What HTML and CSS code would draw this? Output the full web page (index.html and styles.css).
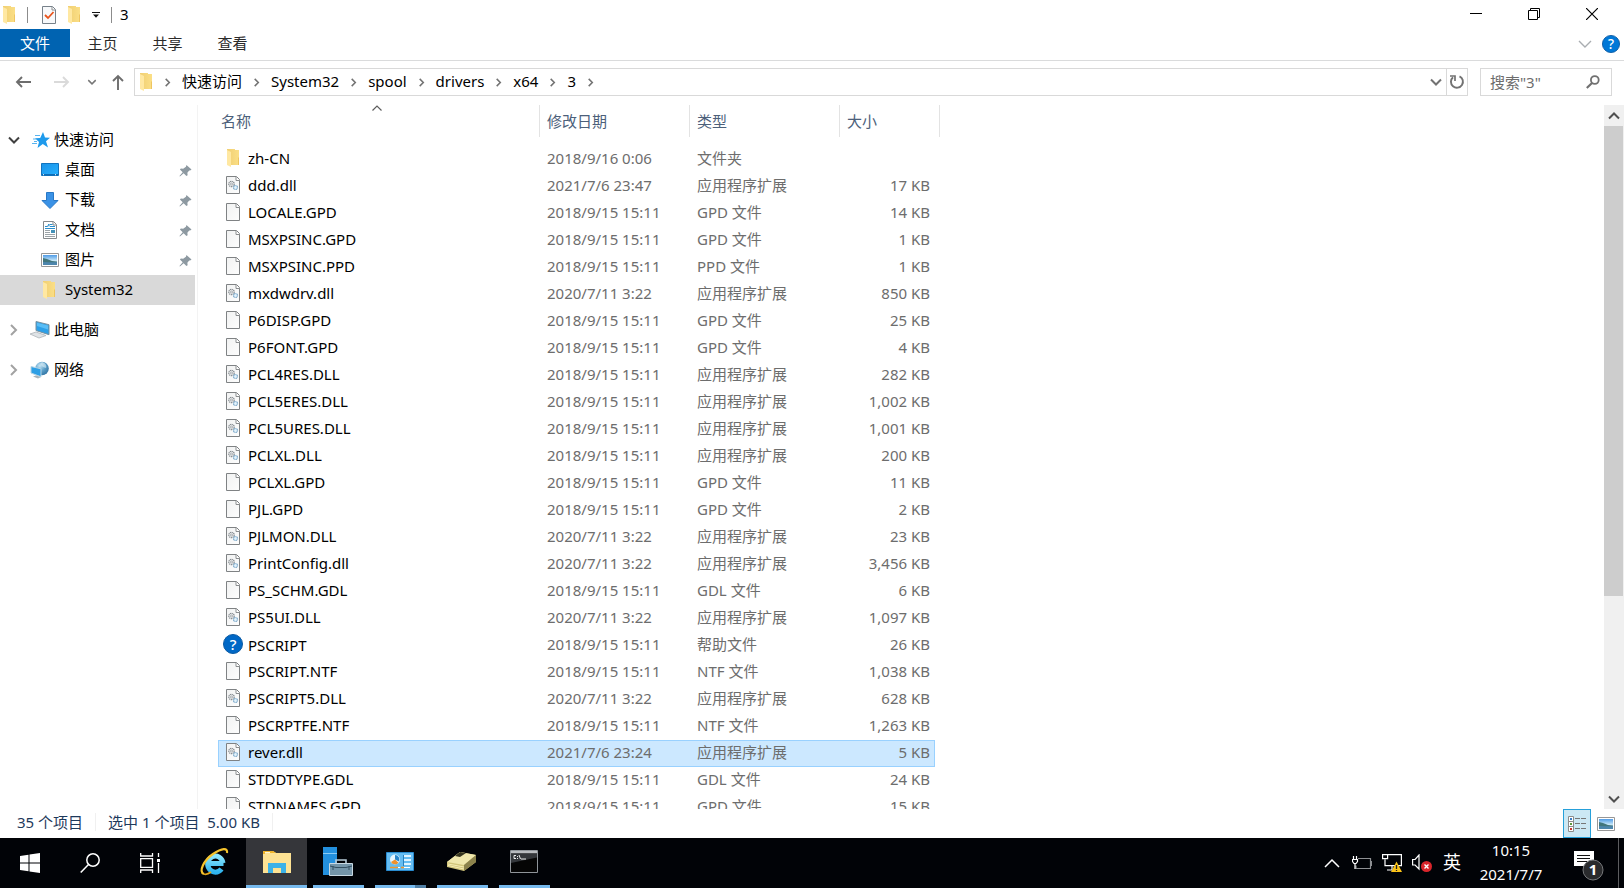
FILE: index.html
```html
<!DOCTYPE html>
<html lang="zh-CN">
<head>
<meta charset="utf-8">
<title>3</title>
<link rel="stylesheet" href="styles.css">
</head>
<body>
<svg class="defs" aria-hidden="true">
  <defs>
    <linearGradient id="g-folder" x1="0" y1="0" x2="1" y2="0"><stop offset="0" stop-color="#f0cf73"/><stop offset="1" stop-color="#fbdf86"/></linearGradient>
    <linearGradient id="g-page" x1="0" y1="0" x2="1" y2="1"><stop offset="0" stop-color="#f1f2f2"/><stop offset="1" stop-color="#fdfdfd"/></linearGradient>
    <linearGradient id="g-blue" x1="0" y1="0" x2="1" y2="1"><stop offset="0" stop-color="#1a93e8"/><stop offset="1" stop-color="#27b1ff"/></linearGradient>
    <linearGradient id="g-sky" x1="0" y1="0" x2="0" y2="1"><stop offset="0" stop-color="#4f9be6"/><stop offset=".55" stop-color="#c5e6f8"/><stop offset="1" stop-color="#e6f4fb"/></linearGradient>
    <linearGradient id="g-ie" x1="0" y1="0" x2="0" y2="1"><stop offset="0" stop-color="#8be6fd"/><stop offset="1" stop-color="#2fb4ee"/></linearGradient>
    <radialGradient id="g-globe" cx=".35" cy=".3" r=".8"><stop offset="0" stop-color="#c9e6f5"/><stop offset=".5" stop-color="#5b9fc9"/><stop offset="1" stop-color="#2d6f9f"/></radialGradient>
  </defs>
  <symbol id="folder" viewBox="0 0 14 18">
    <path d="M1 0h8v1h4v15H5l-4 0z" fill="url(#g-folder)"/>
    <path d="M1 1l4 2v15l-4-2z" fill="#ffe8a2"/>
    <path d="M12 8v8h1V9z" fill="#eec561"/>
  </symbol>
  <symbol id="page" viewBox="0 0 14 18">
    <path d="M.5.5h10l3 3v14H.5z" fill="url(#g-page)" stroke="#7f8284"/>
    <path d="M10 1v3.500h3.500" fill="#fff" stroke="#8b8e90"/>
  </symbol>
  <symbol id="dll" viewBox="0 0 14 18">
    <use href="#page" width="14" height="18"/>
    <circle cx="5.500" cy="8" r="2.700" fill="#f0f1f1" stroke="#858b90" stroke-width="1.200" stroke-dasharray="1.200 .6"/>
    <circle cx="5.500" cy="8" r="1" fill="#fff" stroke="#858b90" stroke-width=".7"/>
    <circle cx="9.500" cy="11.500" r="2" fill="#e3f2fb" stroke="#78a6c8" stroke-width="1.200" stroke-dasharray="1 .4"/>
  </symbol>
  <symbol id="pin" viewBox="0 0 14 14">
    <path d="M8 1l5.500 5-1.500 1-1 0-2 2.500.3 2.500L8 13 5 10 1 13.500.5 13 4 9 1 6l1-1.200 2.500.3L7.500 3z" fill="#8d99a1"/>
  </symbol>
  <symbol id="picture" viewBox="0 0 18 14">
    <path d="M.5.500h17v13H.5z" fill="#fff" stroke="#979797"/>
    <path d="M2 2h14v10H2z" fill="url(#g-sky)"/>
    <path d="M2 5l4 1 5 2 5 .5V10H2z" fill="#42767c"/>
    <path d="M2 9l5 .3 9 0V12H2z" fill="#4d86ad"/>
  </symbol>
  <symbol id="crumb" viewBox="0 0 8 10"><path d="M2 1l4 4-4 4" fill="none" stroke="#727272" stroke-width="1.700"/></symbol>
  <symbol id="expand" viewBox="0 0 8 12"><path d="M1 1l5 5-5 5" fill="none" stroke="#a2a2a2" stroke-width="2"/></symbol>
  <symbol id="down" viewBox="0 0 12 8"><path d="M1 1.500l5 5 5-5" fill="none" stroke="currentColor" stroke-width="2"/></symbol>
</svg>

<header class="titlebar">
  <div class="quick">
    <svg class="i14"><use href="#folder"/></svg>
    <i class="bar"></i>
    <button aria-label="属性"><svg class="i14" viewBox="0 0 14 18"><path d="M.5.5h10l3 3v14H.5z" fill="#f7f9fb" stroke="#77818a"/><path d="M10 1v3h3" fill="#fff" stroke="#8b8e90"/><path d="M3 9l3 3 5.500-6" fill="none" stroke="#e8541d" stroke-width="1.800"/></svg></button>
    <button aria-label="新建文件夹"><svg class="i14"><use href="#folder"/></svg></button>
    <button aria-label="自定义快速访问工具栏"><svg width="8" height="6" viewBox="0 0 8 6"><path d="M0 0h8v1H0zM1 2.500h6L4 5.800z" fill="#111"/></svg></button>
    <i class="bar"></i>
  </div>
  <h1 class="title">3</h1>
  <div class="window-buttons">
    <button aria-label="最小化"><svg width="12" height="12" viewBox="0 0 12 12"><path d="M0 5h12v1H0z"/></svg></button>
    <button aria-label="还原"><svg width="12" height="12" viewBox="0 0 12 12"><path d="M.5 2.500h9v9h-9zM2.500 2.500v-2h9v9h-2" fill="none" stroke="#000"/></svg></button>
    <button aria-label="关闭"><svg width="12" height="12" viewBox="0 0 12 12"><path d="M0 0l12 12M12 0L0 12" stroke="#000" stroke-width="1.200"/></svg></button>
  </div>
</header>

<nav class="ribbon">
  <button class="tab file">文件</button>
  <button class="tab">主页</button>
  <button class="tab">共享</button>
  <button class="tab">查看</button>
  <div class="ribbon-end">
    <button aria-label="展开功能区"><svg width="14" height="8" viewBox="0 0 14 8"><path d="M1 1l6 6 6-6" fill="none" stroke="#a9adb1" stroke-width="1.400"/></svg></button>
    <button aria-label="帮助"><svg width="18" height="18" viewBox="0 0 20 20"><circle cx="10" cy="10" r="9.500" fill="#0078d7" stroke="#0b5aa3"/><text x="10" y="15.500" text-anchor="middle" class="help-mark">?</text></svg></button>
  </div>
</nav>

<div class="address-row">
  <div class="history">
    <button aria-label="后退"><svg width="16" height="12" viewBox="0 0 16 12"><path d="M7 1L2 6l5 5M2 6h14" fill="none" stroke="#6d6d6d" stroke-width="1.900"/></svg></button>
    <button aria-label="前进"><svg width="16" height="12" viewBox="0 0 16 12"><path d="M9 1l5 5-5 5M14 6H0" fill="none" stroke="#dadada" stroke-width="1.900"/></svg></button>
    <button aria-label="最近浏览的位置" class="recent"><svg width="10" height="6" viewBox="0 0 12 8"><use href="#down"/></svg></button>
    <button aria-label="上移" class="up"><svg width="12" height="16" viewBox="0 0 12 16"><path d="M1 7l5-5 5 5M6 2v14" fill="none" stroke="#6d6d6d" stroke-width="1.900"/></svg></button>
  </div>
  <div class="address">
    <svg class="i14"><use href="#folder"/></svg>
    <svg class="sep"><use href="#crumb"/></svg>
    <button>快速访问</button><svg class="sep"><use href="#crumb"/></svg>
    <button>System32</button><svg class="sep"><use href="#crumb"/></svg>
    <button>spool</button><svg class="sep"><use href="#crumb"/></svg>
    <button>drivers</button><svg class="sep"><use href="#crumb"/></svg>
    <button>x64</button><svg class="sep"><use href="#crumb"/></svg>
    <button>3</button><svg class="sep"><use href="#crumb"/></svg>
    <div class="address-end">
      <button class="drop" aria-label="以前的位置"><svg width="12" height="8"><use href="#down"/></svg></button>
      <button class="reload" aria-label="刷新"><svg width="16" height="16" viewBox="0 0 16 16"><path d="M10.500 2.300A6 6 0 1 1 4 3.200" fill="none" stroke="#727272" stroke-width="1.900"/><path d="M1 2h5v5" fill="none" stroke="#727272" stroke-width="1.700"/></svg></button>
    </div>
  </div>
  <div class="search">
    <input type="text" placeholder="搜索&quot;3&quot;" aria-label="搜索">
    <svg width="14" height="14" viewBox="0 0 14 14"><circle cx="8.800" cy="5" r="3.900" fill="none" stroke="#707070" stroke-width="1.800"/><path d="M6 8L.8 13" stroke="#707070" stroke-width="2.200"/></svg>
  </div>
</div>

<main class="main">
  <nav class="tree">
    <a href="#" class="node root"><svg class="twist open" width="12" height="8"><use href="#down"/></svg>
      <svg width="18" height="16" viewBox="0 0 18 16"><path d="M11 0l2 5.500 5 .2-4 3.600 2 6.200-5.200-3.500L5.500 16l1.500-6-4-3.700 5.200-.4z" fill="#1e9aec"/><path d="M3 3.500h5M1 7h3M0 11.500h5M2 9.500h3" stroke="#58b4f0"/></svg><span>快速访问</span></a>
    <a href="#" class="node"><svg class="ico" width="18" height="14" viewBox="0 0 18 14"><path d="M.5.500h17v12H.5z" fill="url(#g-blue)" stroke="#1174bf"/><path d="M1 11h16v1.500H1z" fill="#0d6cb5"/><path d="M2 11.700h1M14 11.700h1" stroke="#fff"/></svg><span>桌面</span><svg class="pin"><use href="#pin"/></svg></a>
    <a href="#" class="node"><svg class="ico" width="18" height="17" viewBox="0 0 18 17"><path d="M5.500.5h7v8h4.500L9 16.500 1 8.500h4.500z" fill="#3a92e6" stroke="#2878c6"/></svg><span>下载</span><svg class="pin"><use href="#pin"/></svg></a>
    <a href="#" class="node"><svg class="ico" width="18" height="18" viewBox="0 0 18 18"><path d="M2.500.5h10l3 3v14h-13z" fill="#fff" stroke="#85898c"/><path d="M12 1v3h3" fill="none" stroke="#85898c"/><path d="M4 5.500h2.500l1.500-2.500v2.500M9 3.500h2.500M9 5.500h5M4 7.500h10" fill="none" stroke="#298dcb"/><path d="M4 9.500h5M4 11.500h5M4 13.500h10M4 15.500h10" stroke="#9ba3a8"/><path d="M10 9h4v3h-4z" fill="#4391b8"/></svg><span>文档</span><svg class="pin"><use href="#pin"/></svg></a>
    <a href="#" class="node"><svg class="ico" width="18" height="14"><use href="#picture"/></svg><span>图片</span><svg class="pin"><use href="#pin"/></svg></a>
    <a href="#" class="node selected"><svg class="ico" width="18" height="18" viewBox="0 0 18 18"><use href="#folder" x="1" width="14" height="18"/></svg><span>System32</span></a>
    <a href="#" class="node root group"><svg class="twist" width="12" height="12"><use href="#expand"/></svg>
      <svg width="20" height="18" viewBox="0 0 20 18"><path d="M6 .5l13 3.200v10L6 9.500z" fill="#2da0e8" stroke="#78909e"/><path d="M7 1.700l11 2.700v4L7 5z" fill="#59bdf5"/><path d="M0 13l6-2 10 3.500L9 17z" fill="#dfe3e6" stroke="#adb4b9" stroke-width=".8"/></svg><span>此电脑</span></a>
    <a href="#" class="node root group"><svg class="twist" width="12" height="12"><use href="#expand"/></svg>
      <svg width="20" height="18" viewBox="0 0 20 18"><circle cx="12" cy="7.500" r="6.800" fill="url(#g-globe)"/><path d="M12 1c3 1 5 3 4 6l-3-1-3-3z" fill="#dceef7" opacity=".6"/><path d="M1 5.500l10 2.300v8L1 12z" fill="#2d9fe5" stroke="#b6d5e6"/><path d="M6 14.500l5 1.500-3 1.500-5-2z" fill="#a9b4ba"/></svg><span>网络</span></a>
  </nav>

  <section class="files">
    <table class="list">
      <colgroup><col class="c-name"><col class="c-date"><col class="c-type"><col class="c-size"><col class="c-edge"></colgroup>
      <thead><tr>
        <th scope="col"><div class="head">名称<svg class="sort" width="10" height="6" viewBox="0 0 10 6"><path d="M.5 5.500L5 1l4.500 4.500" fill="none" stroke="#5d5d5d" stroke-width="1.200"/></svg></div></th>
        <th scope="col"><div class="head">修改日期</div></th>
        <th scope="col"><div class="head">类型</div></th>
        <th scope="col" colspan="2"><div class="head">大小</div></th>
      </tr></thead>
      <tbody>
        <tr><td><svg><use href="#folder"/></svg>zh-CN</td><td>2018/9/16 0:06</td><td>文件夹</td><td></td></tr>
        <tr><td><svg><use href="#dll"/></svg>ddd.dll</td><td>2021/7/6 23:47</td><td>应用程序扩展</td><td>17 KB</td></tr>
        <tr><td><svg><use href="#page"/></svg>LOCALE.GPD</td><td>2018/9/15 15:11</td><td>GPD 文件</td><td>14 KB</td></tr>
        <tr><td><svg><use href="#page"/></svg>MSXPSINC.GPD</td><td>2018/9/15 15:11</td><td>GPD 文件</td><td>1 KB</td></tr>
        <tr><td><svg><use href="#page"/></svg>MSXPSINC.PPD</td><td>2018/9/15 15:11</td><td>PPD 文件</td><td>1 KB</td></tr>
        <tr><td><svg><use href="#dll"/></svg>mxdwdrv.dll</td><td>2020/7/11 3:22</td><td>应用程序扩展</td><td>850 KB</td></tr>
        <tr><td><svg><use href="#page"/></svg>P6DISP.GPD</td><td>2018/9/15 15:11</td><td>GPD 文件</td><td>25 KB</td></tr>
        <tr><td><svg><use href="#page"/></svg>P6FONT.GPD</td><td>2018/9/15 15:11</td><td>GPD 文件</td><td>4 KB</td></tr>
        <tr><td><svg><use href="#dll"/></svg>PCL4RES.DLL</td><td>2018/9/15 15:11</td><td>应用程序扩展</td><td>282 KB</td></tr>
        <tr><td><svg><use href="#dll"/></svg>PCL5ERES.DLL</td><td>2018/9/15 15:11</td><td>应用程序扩展</td><td>1,002 KB</td></tr>
        <tr><td><svg><use href="#dll"/></svg>PCL5URES.DLL</td><td>2018/9/15 15:11</td><td>应用程序扩展</td><td>1,001 KB</td></tr>
        <tr><td><svg><use href="#dll"/></svg>PCLXL.DLL</td><td>2018/9/15 15:11</td><td>应用程序扩展</td><td>200 KB</td></tr>
        <tr><td><svg><use href="#page"/></svg>PCLXL.GPD</td><td>2018/9/15 15:11</td><td>GPD 文件</td><td>11 KB</td></tr>
        <tr><td><svg><use href="#page"/></svg>PJL.GPD</td><td>2018/9/15 15:11</td><td>GPD 文件</td><td>2 KB</td></tr>
        <tr><td><svg><use href="#dll"/></svg>PJLMON.DLL</td><td>2020/7/11 3:22</td><td>应用程序扩展</td><td>23 KB</td></tr>
        <tr><td><svg><use href="#dll"/></svg>PrintConfig.dll</td><td>2020/7/11 3:22</td><td>应用程序扩展</td><td>3,456 KB</td></tr>
        <tr><td><svg><use href="#page"/></svg>PS_SCHM.GDL</td><td>2018/9/15 15:11</td><td>GDL 文件</td><td>6 KB</td></tr>
        <tr><td><svg><use href="#dll"/></svg>PS5UI.DLL</td><td>2020/7/11 3:22</td><td>应用程序扩展</td><td>1,097 KB</td></tr>
        <tr><td><svg class="wide" viewBox="0 0 20 20"><circle cx="10" cy="10" r="9.500" fill="#0068c6" stroke="#0b5aa3"/><text x="10" y="15.500" text-anchor="middle" class="help-mark">?</text></svg>PSCRIPT</td><td>2018/9/15 15:11</td><td>帮助文件</td><td>26 KB</td></tr>
        <tr><td><svg><use href="#page"/></svg>PSCRIPT.NTF</td><td>2018/9/15 15:11</td><td>NTF 文件</td><td>1,038 KB</td></tr>
        <tr><td><svg><use href="#dll"/></svg>PSCRIPT5.DLL</td><td>2020/7/11 3:22</td><td>应用程序扩展</td><td>628 KB</td></tr>
        <tr><td><svg><use href="#page"/></svg>PSCRPTFE.NTF</td><td>2018/9/15 15:11</td><td>NTF 文件</td><td>1,263 KB</td></tr>
        <tr class="selected"><td><svg><use href="#dll"/></svg>rever.dll</td><td>2021/7/6 23:24</td><td>应用程序扩展</td><td>5 KB</td></tr>
        <tr><td><svg><use href="#page"/></svg>STDDTYPE.GDL</td><td>2018/9/15 15:11</td><td>GDL 文件</td><td>24 KB</td></tr>
        <tr><td><svg><use href="#page"/></svg>STDNAMES.GPD</td><td>2018/9/15 15:11</td><td>GPD 文件</td><td>15 KB</td></tr>
      </tbody>
    </table>
  </section>

  <div class="scrollbar">
    <button aria-label="向上滚动"><svg class="flip" width="12" height="8"><use href="#down"/></svg></button>
    <div class="track"><div class="thumb"></div></div>
    <button aria-label="向下滚动"><svg width="12" height="8"><use href="#down"/></svg></button>
  </div>
</main>

<footer class="status">
  <span class="cell">35 个项目</span>
  <span class="cell">选中 1 个项目&nbsp; 5.00 KB</span>
  <div class="views">
    <button class="view active" aria-label="详细信息"><svg width="18" height="16" viewBox="0 0 18 16"><path d="M.5.500h5v15h-5zM.5 5.500h5M.5 10.500h5" fill="#fff" stroke="#8c8c8c"/><path d="M2 2h2v2H2z" fill="#3c7dc4"/><path d="M2 7h2v2H2z" fill="#5f9a3e"/><path d="M2 12h2v2H2z" fill="#c8372d"/><path d="M7 2.500h5M13 2.500h5M7 7.500h5M13 7.500h5M7 12.500h5M13 12.500h5" stroke="#777"/></svg></button>
    <button class="view" aria-label="大缩略图"><svg width="18" height="14"><use href="#picture"/></svg></button>
  </div>
</footer>

<nav class="taskbar">
  <div class="system">
    <button aria-label="开始"><svg width="20" height="20" viewBox="0 0 20 20"><path d="M0 3l8.500-1.200v7.700H0zM9.500 1.600L20 0v9.500H9.500zM0 10.500h8.500v7.700L0 17zM9.500 10.500H20V20L9.500 18.400z" fill="#fff"/></svg></button>
    <button aria-label="搜索"><svg width="20" height="20" viewBox="0 0 20 20"><circle cx="13" cy="7" r="6.200" fill="none" stroke="#fff" stroke-width="1.500"/><path d="M8.500 11.500L.7 19.500" stroke="#fff" stroke-width="1.500"/></svg></button>
    <button aria-label="任务视图"><svg width="20" height="20" viewBox="0 0 20 20"><path d="M.700 0v3h11.800V0M.7 20v-3h11.800v3M.7 5.700h11.800v8.600H.7zM18.500 0v4M18.500 10v10" fill="none" stroke="#fff" stroke-width="1.300"/><path d="M17 6h3v3h-3z" fill="#fff"/></svg></button>
  </div>
  <div class="apps">
    <button class="app" aria-label="Internet Explorer"><svg width="30" height="30" viewBox="0 0 30 30"><path d="M8 16.500h15.500M23 16a7.700 8 0 1 0-1.500 6" fill="none" stroke="url(#g-ie)" stroke-width="5"/><path d="M4 27c-6-2 0-14 9-20S28 .5 27 6" fill="none" stroke="#f5c32c" stroke-width="2.200"/><path d="M4 27c2 .8 5-.5 7-2" fill="none" stroke="#e3a91c" stroke-width="1.800"/></svg></button>
    <button class="app running active" aria-label="文件资源管理器"><svg width="28" height="24" viewBox="0 0 28 24"><path d="M0 1h10l3 2h15v20H0z" fill="#fde293"/><path d="M0 1h10l3 2H2v1H0z" fill="#f1b52c"/><path d="M2 2h5v1H2z" fill="#fff6d6"/><path d="M5 23V13h18v10h-5v-5h-8v5z" fill="#3cb2e8"/></svg></button>
    <button class="app running" aria-label="服务器管理器"><svg width="30" height="30" viewBox="0 0 30 30"><path d="M0 0h14v28H0z" fill="#2390de"/><path d="M0 6.500h14" stroke="#8acbf4"/><path d="M6.500 16.500h23v12h-23z" fill="#7495a9" stroke="#c7d8e2"/><path d="M13 16v-3h10v3" fill="none" stroke="#b7cbd7" stroke-width="1.600"/><path d="M7 19l6 1.500h10l6-1.500M10 19v4M26 19v4" fill="none" stroke="#334f60"/></svg></button>
    <button class="app running stacked" aria-label="控制面板"><svg width="28" height="20" viewBox="0 0 28 20"><path d="M.5.500h27v18H.5z" fill="#65bdf2" stroke="#288bd0"/><circle cx="9" cy="7.500" r="5" fill="#e6f6ff"/><path d="M9 7.500V3a4.500 4.500 0 0 1 4 6.500z" fill="#2a86ca"/><path d="M9 7.500L5 10a4.600 4.600 0 0 0 7.500.8z" fill="#f0912c"/><path d="M18 4h7M18 8h7M18 12h7" stroke="#dff4ff" stroke-width="2"/><path d="M17 3h1v11h-1z" fill="#2880bd"/><path d="M4 15.500h8M15 15.500h3" stroke="#ee972f" stroke-width="1.500"/><path d="M12 15.500h2M18 15.500h6" stroke="#fff"/></svg></button>
    <button class="app running" aria-label="注册表工具"><svg width="30" height="20" viewBox="0 0 30 20"><path d="M0 10L13 0l16 3v7L17 19 0 15z" fill="#d1c57b"/><path d="M0 10L13 0l16 3-12 10z" fill="#f0e8ad"/><path d="M8 4l5-4 6 1-6 4z" fill="#36351f"/><path d="M17 13l12-10v7L17 19z" fill="#8c834c"/><path d="M1 12l16 3M1 13.500l16 3.500" stroke="#fff6c2" stroke-width=".8"/></svg></button>
    <button class="app running" aria-label="命令提示符"><svg width="28" height="23" viewBox="0 0 28 23"><path d="M.5.500h27v22H.5z" fill="#050505" stroke="#8f9499"/><path d="M1 1h26v2.500H1z" fill="#b9bcc0"/><path d="M1 3.500h26v4L1 13z" fill="#34373b"/><path d="M6 5.500H4v3h2M7.500 6v1M7.500 8v1M9 5l1.500 4M11 9h5" fill="none" stroke="#fff" stroke-width=".9"/></svg></button>
  </div>
  <div class="tray">
    <button aria-label="显示隐藏的图标"><svg width="16" height="10" viewBox="0 0 16 10"><path d="M1 9l7-7 7 7" fill="none" stroke="#fff" stroke-width="1.500"/></svg></button>
    <button aria-label="电源"><svg width="20" height="14" viewBox="0 0 20 14"><path d="M6 2.500h12.500v10H4v-3M19.500 5v5" fill="none" stroke="#8d8f92" stroke-width="1.200"/><path d="M1.500 0v3M4.500 0v3M.5 3.500h5v2l-1.500 2h-2l-1.500-2zM3 7v6" fill="none" stroke="#fff" stroke-width="1.200"/></svg></button>
    <button aria-label="网络"><svg width="20" height="18" viewBox="0 0 20 18"><path d="M6 .6h13.400v11H3v-6M10 12v4H5M.6.6h5v4h-5z" fill="none" stroke="#fff" stroke-width="1.200"/><path d="M14.500 7.500L20 18H9z" fill="#fcc419"/><path d="M14.500 11v4M14.500 16v1" stroke="#222" stroke-width="1.300"/></svg></button>
    <button aria-label="音量"><svg width="20" height="18" viewBox="0 0 20 18"><path d="M.6 5.500h2.500L7 1v14l-3.900-4H.6z" fill="none" stroke="#fff" stroke-width="1.200"/><circle cx="14.500" cy="12.500" r="5.500" fill="#d9252b"/><path d="M12.500 10.500l4 4M16.500 10.500l-4 4" stroke="#fff" stroke-width="1.400"/></svg></button>
    <button class="lang">英</button>
    <button class="clock"><span>10:15</span><span>2021/7/7</span></button>
    <button class="notify" aria-label="1 条新通知"><svg width="32" height="32" viewBox="0 0 32 32"><path d="M1 2h20v15h-7v4l-4-4H1z" fill="#fff"/><path d="M4 6.500h13M4 9.500h13M4 12.500h10" stroke="#111"/><circle cx="20" cy="21" r="10" fill="#2a2b2d" stroke="#77797b"/><text x="20" y="26" text-anchor="middle" class="badge">1</text></svg></button>
    <i class="peek"></i>
  </div>
</nav>
</body>
</html>
```
FILE: styles.css
```css
* { box-sizing: border-box; }

body {
  margin: 0;
  height: 100vh;
  display: flex;
  flex-direction: column;
  overflow: hidden;
  background: #fff;
  color: #000;
  font: 15px/20px "Noto Sans", "Noto Sans CJK SC", sans-serif;
}

button {
  margin: 0;
  padding: 0;
  border: 0;
  background: none;
  color: inherit;
  font: inherit;
  display: flex;
  align-items: center;
  justify-content: center;
}

svg { display: block; flex: none; }
.defs { position: absolute; width: 0; height: 0; }
.i14 { width: 14px; height: 18px; }
.help-mark { font: 500 15px "Noto Sans", sans-serif; fill: #fff; }

/* Title bar */
.titlebar { display: flex; align-items: center; height: 29px; flex: none; }
.quick { display: flex; align-items: center; gap: 11px; padding-left: 2px; }
.quick .bar { width: 1px; height: 16px; background: #8c8c8c; margin-right: 3px; }
.title { margin: 0 0 0 5px; padding-bottom: 2px; font-size: 15px; font-weight: 400; }
.window-buttons { display: flex; height: 27px; margin: 0 0 2px auto; padding-right: 3px; }
.window-buttons button { width: 58px; }

/* Ribbon */
.ribbon { display: flex; height: 32px; flex: none; border-bottom: 1px solid #dadbdc; }
.tab { width: 65px; height: 28px; color: #2b2b2b; }
.tab.file { width: 70px; background: #0063b1; color: #fff; }
.ribbon-end { display: flex; gap: 10px; margin-left: auto; padding: 0 4px 2px 0; }

/* Address row */
.address-row { display: flex; padding: 7px 12px 9px 15px; flex: none; }
.history { display: flex; align-items: center; width: 119px; color: #777; }
.history button { margin-right: 23px; }
.history .recent { margin: 0 15px 0 -6px; }
.history .up { margin: 0; }
.address {
  flex: 1;
  display: flex;
  align-items: center;
  height: 28px;
  padding-left: 4px;
  border: 1px solid #d9d9d9;
}
.address > button { padding-bottom: 2px; }
.address .sep { width: 29px; height: 9px; }
.address-end { display: flex; align-self: stretch; margin-left: auto; color: #727272; }
.drop { width: 20px; }
.reload { width: 21px; border-left: 1px solid #d9d9d9; }
.search {
  display: flex;
  align-items: center;
  width: 132px;
  margin-left: 12px;
  padding: 0 11px 0 9px;
  border: 1px solid #d9d9d9;
}
.search input {
  flex: 1;
  min-width: 0;
  padding: 0;
  border: 0;
  outline: 0;
  background: none;
  font: inherit;
}
.search input::placeholder { color: #6d6d6d; opacity: 1; }

/* Main area */
.main { flex: 1; min-height: 0; display: flex; }
.tree { width: 198px; padding: 20px 2px 0 0; border-right: 1px solid #f3f3f3; flex: none; }
.node {
  display: flex;
  align-items: center;
  height: 30px;
  padding: 0 3px 0 41px;
  gap: 6px;
  color: #000;
  text-decoration: none;
}
.node span { padding-bottom: 2px; }
.node.root { padding-left: 8px; gap: 4px; }
.node.group { margin-top: 10px; }
.node.selected { background: #d9d9d9; }
.twist { margin-right: 6px; color: #404040; }
.twist.open { margin-right: 8px; }
.pin { width: 13px; height: 13px; margin-left: auto; }

.files { flex: 1; min-width: 0; overflow: hidden; padding-left: 20px; }
.list { width: 722px; table-layout: fixed; border-collapse: separate; border-spacing: 0; }
.c-name { width: 322px; }
.c-date, .c-type { width: 150px; }
.c-size { width: 95px; }
.c-edge { width: 5px; }
.list th { height: 41px; padding: 0; vertical-align: top; font-weight: 400; text-align: left; color: #4c607a; }
.head {
  position: relative;
  height: 32px;
  padding: 6px 0 0 7px;
  border-right: 1px solid #e3e3e3;
}
th:first-child .head { padding-left: 3px; }
.sort { position: absolute; left: calc(50% - 7px); top: 0; }
.list td {
  height: 27px;
  padding: 0 0 3px 7px;
  border: solid transparent;
  border-width: 1px 0;
  white-space: nowrap;
  color: #6d6d6d;
}
.list td:first-child { padding-left: 8px; color: #000; }
.list td:nth-child(4) { padding: 0 5px 3px 0; text-align: right; }
.list td svg { display: inline-block; width: 14px; height: 18px; margin: 0 8px 0 0; vertical-align: -3px; }
.list td svg.wide { width: 20px; height: 20px; margin: 0 5px 0 -3px; }
.list .selected td { background: #cce8ff; border-color: #99d1ff; }
.list .selected td:first-child { border-left: 1px solid #99d1ff; padding-left: 7px; }
.list .selected td:nth-child(4) { border-right: 1px solid #99d1ff; padding-right: 4px; }

.scrollbar { display: flex; flex-direction: column; width: 20px; background: #f0f0f0; color: #505050; }
.scrollbar button { height: 21px; }
.flip { transform: rotate(180deg); }
.track { flex: 1; padding-right: 1px; }
.thumb { height: 71%; background: #cdcdcd; }

/* Status bar */
.status { display: flex; align-items: center; height: 29px; flex: none; padding-left: 17px; color: #1e395b; }
.cell { padding-right: 12px; margin: 0 12px 3px 0; border-right: 1px solid #f0f0f0; line-height: 18px; }
.views { display: flex; align-self: stretch; margin-left: auto; padding-right: 4px; }
.view { width: 29px; }
.view.active { width: 28px; border: 1px solid #26a0da; background: #cce8f4; }

/* Taskbar */
.taskbar { display: flex; height: 50px; flex: none; background: #010307; color: #fff; }
.system, .apps, .tray { display: flex; }
.system button { width: 60px; }
.apps { margin-left: 4px; }
.app { width: 62px; border-bottom: 3px solid transparent; }
.app.running {
  background: linear-gradient(#76b9ed, #76b9ed) center bottom / 51px 3px no-repeat border-box;
}
.app.running.active { width: 61px; background: linear-gradient(#35363a 47px, #76b9ed 47px) border-box; }
.app.stacked {
  background: linear-gradient(90deg, #76b9ed 40px, #507fa5 40px) center bottom / 51px 3px no-repeat border-box;
}
.tray { margin-left: auto; padding-right: 5px; }
.tray button { width: 30px; }
.tray .lang { font-size: 18px; padding-bottom: 2px; }
.tray .clock { width: 88px; flex-direction: column; padding-bottom: 2px; line-height: 24px; }
.tray .notify { width: 63px; padding: 4px 0 0 4px; }
.badge { font: 700 15px "Noto Sans", sans-serif; fill: #fff; }
.peek { width: 1px; background: #5c5d60; }
```
